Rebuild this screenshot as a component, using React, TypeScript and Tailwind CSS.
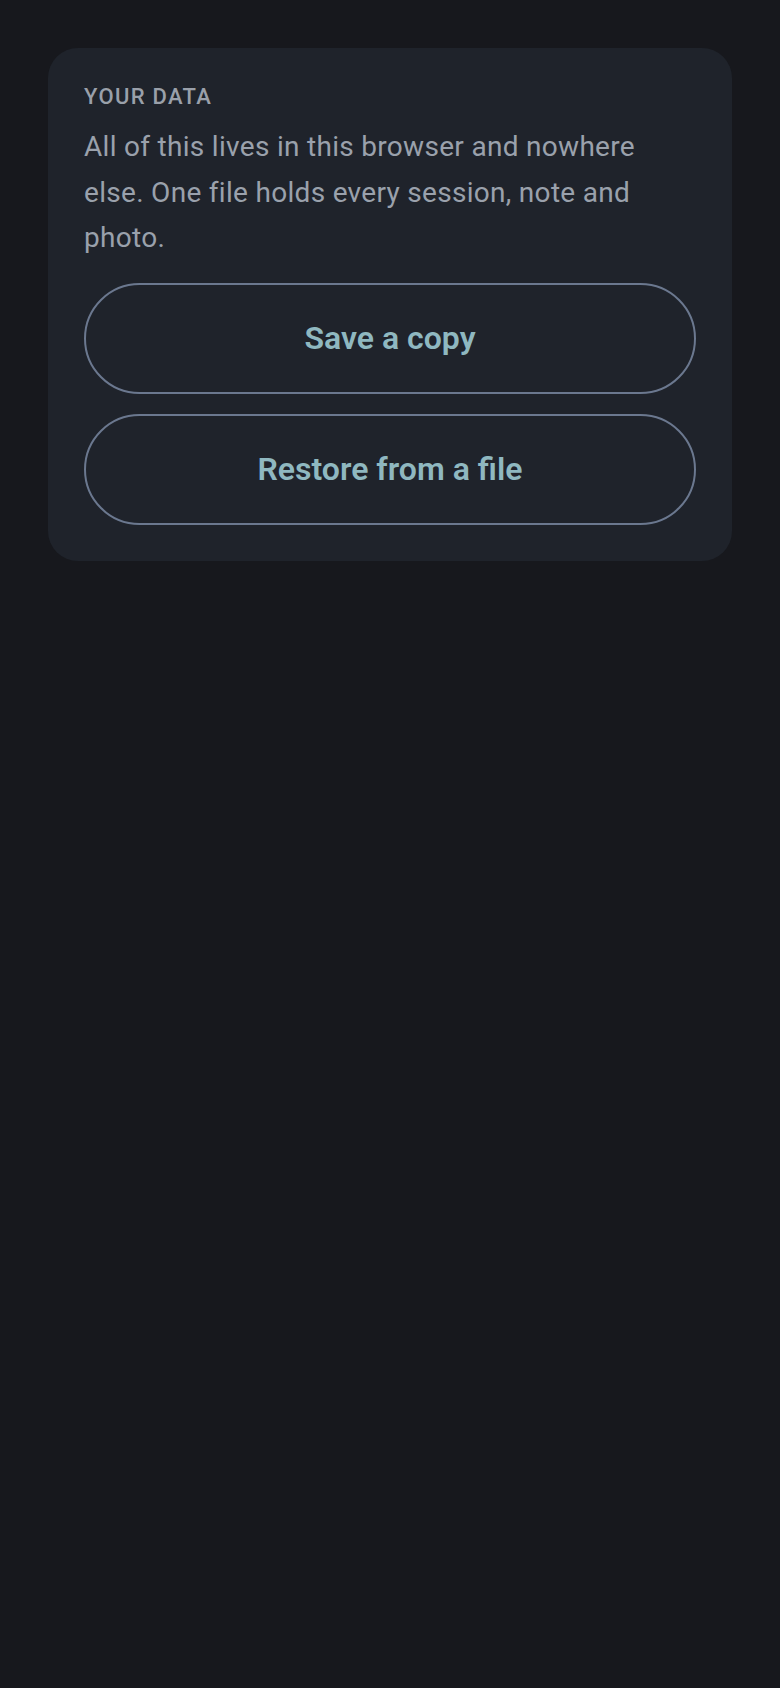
export default function App() {
  return (
    <div
      className="min-h-screen bg-[#17181d] px-12 pt-12"
      style={{ fontFamily: 'Roboto, "Noto Sans", sans-serif' }}
    >
      <section className="rounded-[30px] bg-[#1f232b] p-9">
        {/* Label */}
        <h2 className="pt-[2px] text-[22px] font-medium uppercase leading-none tracking-[0.06em] text-[#9aa0aa]">
          Your data
        </h2>

        <p className="mt-4 text-[28px] leading-[45.5px] tracking-[0.3px] text-[#9aa1ac]">
          All of this lives in this browser and nowhere else. One file holds every session, note and
          photo.
        </p>

        {/* Actions */}
        <div className="mt-[22px] flex flex-col gap-5">
          <button className="h-[111px] w-full rounded-full border-2 border-[#6b788f] text-[32px] font-semibold text-[#8fb8c0]">
            Save a copy
          </button>
          <button className="h-[111px] w-full rounded-full border-2 border-[#6b788f] text-[32px] font-semibold text-[#8fb8c0]">
            Restore from a file
          </button>
        </div>
      </section>
    </div>
  );
}
